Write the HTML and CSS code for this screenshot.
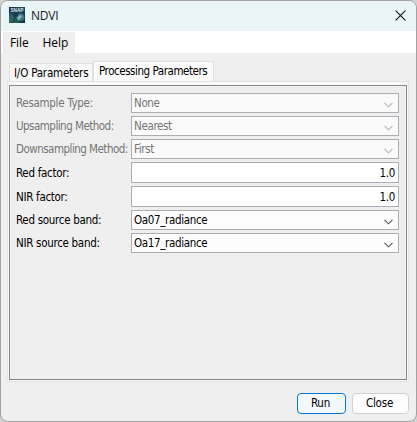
FILE: index.html
```html
<!DOCTYPE html>
<html lang="en">
<head>
<meta charset="utf-8">
<title>NDVI</title>
<link rel="stylesheet" href="styles.css">
</head>
<body>
<main class="window">
  <header class="titlebar">
    <svg class="logo" width="16" height="16" viewBox="0 0 16 16">
      <defs>
        <linearGradient id="sky" x1="0" y1="0" x2="1" y2="1"><stop offset="0" stop-color="#17324d"/><stop offset=".55" stop-color="#1f4a55"/><stop offset="1" stop-color="#142a48"/></linearGradient>
      </defs>
      <rect width="16" height="16" fill="url(#sky)"/>
      <path d="M0 6L4 8L5 12L2 16H0Z" fill="#30616a"/>
      <path d="M3 16L8 11L10 16Z" fill="#285c47"/>
      <circle cx="11.5" cy="10.5" r="3.8" fill="#3f7899"/>
      <path d="M8 11L11 8L13 9L11 12L9 13Z" fill="#8ab8b2"/>
      <path d="M11 13L14 11L14 13L12 14Z" fill="#416e3c"/>
      <path d="M5 7L8 6L9 9L7 10Z" fill="#173448"/>
      <text class="logo-text" x="1.4" y="4.5" textLength="13" lengthAdjust="spacingAndGlyphs">SNAP</text>
    </svg>
    <span class="title">NDVI</span>
    <svg class="close" width="11" height="11" viewBox="0 0 11 11"><path d="M.6.6L10.4 10.4M10.4.6L.6 10.4"/></svg>
  </header>
  <nav class="menubar"><div class="menus"><span class="file">File</span><span>Help</span></div></nav>
  <div class="tabs">
    <div class="tab"><span class="io">I/O Parameters</span></div>
    <div class="tab active"><span>Processing Parameters</span></div>
  </div>
  <section class="pane">
    <div class="form">
      <div class="row off"><label>Resample Type:</label><div class="combo"><span>None</span><svg class="chev" width="9" height="6" viewBox="0 0 9 6"><path d="M.5.8L4.5 4.8L8.5.8"/></svg></div></div>
      <div class="row off"><label class="long">Upsampling Method:</label><div class="combo"><span>Nearest</span><svg class="chev" width="9" height="6" viewBox="0 0 9 6"><path d="M.5.8L4.5 4.8L8.5.8"/></svg></div></div>
      <div class="row off"><label class="long">Downsampling Method:</label><div class="combo"><span>First</span><svg class="chev" width="9" height="6" viewBox="0 0 9 6"><path d="M.5.8L4.5 4.8L8.5.8"/></svg></div></div>
      <div class="row"><label>Red factor:</label><div class="field">1.0</div></div>
      <div class="row"><label>NIR factor:</label><div class="field">1.0</div></div>
      <div class="row"><label>Red source band:</label><div class="combo"><span>Oa07_radiance</span><svg class="chev" width="9" height="6" viewBox="0 0 9 6"><path d="M.5.8L4.5 4.8L8.5.8"/></svg></div></div>
      <div class="row"><label>NIR source band:</label><div class="combo"><span>Oa17_radiance</span><svg class="chev" width="9" height="6" viewBox="0 0 9 6"><path d="M.5.8L4.5 4.8L8.5.8"/></svg></div></div>
    </div>
  </section>
  <footer class="actions"><button class="run">Run</button><button class="cancel">Close</button></footer>
</main>
</body>
</html>
```
FILE: styles.css
```css
* { box-sizing: border-box; }
body { margin: 0; background: #d2d2d2; overflow: hidden; }
.window {
  width: 417px; height: 422px;
  border: 1px solid #a3a3a3; border-radius: 8px;
  background: #efefef; overflow: hidden;
  display: flex; flex-direction: column;
  font: 11.5px/14px "DejaVu Sans Condensed", "DejaVu Sans", sans-serif; letter-spacing: -0.35px; color: #000;
}
.titlebar { height: 30px; flex: none; background: #e9f5f7; display: flex; align-items: center; padding: 0 10px 2px 8px; }
.title { margin-left: 6px; font: 12px/16px "Open Sans", sans-serif; letter-spacing: -0.2px; flex: 1; color: #1a1a1a; padding-top: 1px; }
.logo-text { font: bold 5px "Liberation Sans", sans-serif; fill: #d5e2e8; letter-spacing: 0; }
.close { stroke: #111; stroke-width: 1.1; fill: none; }
.menubar { height: 22px; flex: none; background: #fff; padding-left: 2px; padding-top: 1px; }
.menus { width: 72px; height: 21px; background: #efefef; display: flex; padding: 3px 0 0 7px; gap: 14px; font: 12px/16px "Open Sans", sans-serif; letter-spacing: -0.1px; }
.tabs { height: 28px; flex: none; display: flex; align-items: flex-end; padding-left: 8px; }
.tab { width: 84px; height: 18px; border: 1px solid #e0e0e0; border-bottom: 0; background: #f7f7f7; padding: 2px 0 0 4px; white-space: nowrap; }
.io { letter-spacing: -0.2px; }
.tab.active { width: 121px; height: 20px; background: #fafafa; padding-left: 5px; padding-top: 2px; letter-spacing: -0.45px; }
.pane { margin: 0 7px 0 6px; height: 301px; flex: none; border: 1px solid #e3e3e3; background: #fafafa; padding: 3px 1px 1px; }
.form { height: 295px; border: 1px solid #828790; background: #efefef; padding: 7px 7px 0 6px; display: flex; flex-direction: column; gap: 3px; }
.row { display: flex; align-items: center; }
.row label { width: 115px; white-space: nowrap; letter-spacing: -0.3px; }
.row label.long { letter-spacing: -0.52px; }
.combo, .field { flex: 1; height: 20px; border: 1px solid #abadb3; background: #fdfdfd; display: flex; align-items: center; }
.combo { justify-content: space-between; padding: 0 5px 0 2px; }
.field { height: 21px; background: #fff; justify-content: flex-end; padding: 1px 3px 0 0; }
.chev { fill: none; stroke: #555; stroke-width: 1.1; margin-top: 4px; }
.off { color: #757575; }
.off .combo { background: #fafafa; }
.off .chev { stroke: #b5b5b5; }
.actions { display: flex; justify-content: flex-end; gap: 6px; padding: 11px 7px 0 0; }
button { height: 21px; border: 1px solid #d0d0d0; border-radius: 4px; background: #fdfdfd; font: inherit; letter-spacing: -0.2px; color: #000; padding: 0 2px 1px 0; }
.run { width: 49px; border-color: #0078d4; background: #f3f8fc; }
.cancel { width: 57px; }
```
